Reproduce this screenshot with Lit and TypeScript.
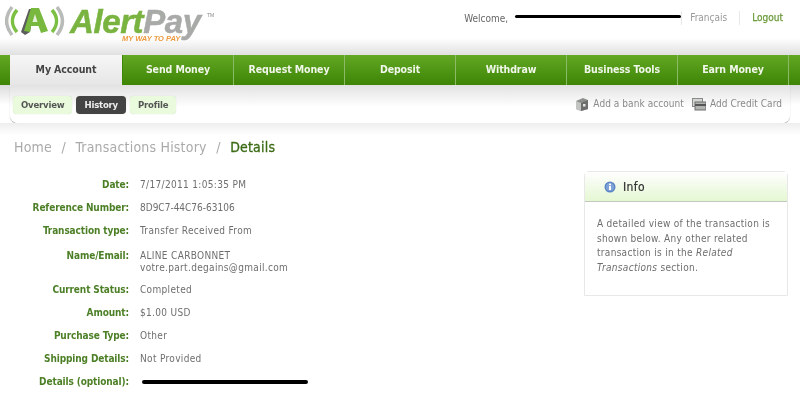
import { LitElement, html, css, svg } from "lit";
import { customElement } from "lit/decorators.js";

const logo = svg`<svg class="mark" width="64" height="34" viewBox="0 0 64 34">
  <path d="M7 2C0 11 0 21 7 30" fill="none" stroke="#b9bbb9" stroke-width="3.5"/>
  <path d="M12 5C6 12 6 20 12 27" fill="none" stroke="#7cc043" stroke-width="3.5"/>
  <path d="M47 5C53 12 53 20 47 27" fill="none" stroke="#7cc043" stroke-width="3.5"/>
  <path d="M52 2C59 11 59 21 52 30" fill="none" stroke="#b9bbb9" stroke-width="3.5"/>
  <path d="M16 27L24 4H29L25 27L20 30Z" fill="#5c5c5c"/>
  <path d="M19 26L26 3H34L43 26L36 28L33.5 21H26L25 27Z" fill="#78b83e"/>
  <path d="M27.5 17L30 9L32.5 17Z" fill="#e4f0d8"/>
</svg>`;

const bank = svg`<svg width="14" height="14" viewBox="0 0 14 14"><path d="M1 4L8 1L13 3V12L6 14L1 12Z" fill="#8d8f8d"/><path d="M1 4L6 6V14L1 12Z" fill="#c2c4c2"/><path d="M6 6L13 3V12L6 14Z" fill="#6c6e6c"/><rect x="8" y="7" width="2.5" height="2.5" fill="#e5e5e5"/></svg>`;
const card = svg`<svg width="14" height="13" viewBox="0 0 14 13"><rect x="0.5" y="0.5" width="10" height="8" fill="#d4d6d4" stroke="#8a8c8a"/><rect x="3" y="4" width="11" height="8" fill="#b2b4b2" stroke="#6c6e6c"/><rect x="3" y="6" width="11" height="2" fill="#555"/></svg>`;
const info = svg`<svg width="12" height="12" viewBox="0 0 12 12"><circle cx="6" cy="6" r="5.5" fill="#5b85c4"/><circle cx="6" cy="6" r="4" fill="#7fa3d8"/><rect x="5" y="5" width="2" height="4" fill="#fff"/><rect x="5" y="2.6" width="2" height="1.6" fill="#fff"/></svg>`;

const tabs = ["My Account", "Send Money", "Request Money", "Deposit", "Withdraw", "Business Tools", "Earn Money"];
const rows: [string, unknown, string][] = [
  ["Date:", "7/17/2011 1:05:35 PM", ""],
  ["Reference Number:", "8D9C7-44C76-63106", "tight"],
  ["Transaction type:", "Transfer Received From", ""],
  ["Name/Email:", html`ALINE CARBONNET<br />votre.part.degains@gmail.com`, "name"],
  ["Current Status:", "Completed", ""],
  ["Amount:", "$1.00 USD", ""],
  ["Purchase Type:", "Other", ""],
  ["Shipping Details:", "Not Provided", ""],
  ["Details (optional):", html`<div class="redact r2"></div>`, ""],
];

@customElement("app-root")
export class AppRoot extends LitElement {
  static styles = css`
    :host {
      display: block;
      width: 800px;
      height: 409px;
      overflow: hidden;
      background: #fff;
      font-family: "DejaVu Sans Condensed", "DejaVu Sans", sans-serif;
      font-stretch: condensed;
      font-size: 10px;
      color: #777;
    }
    .wrap { filter: blur(0.35px); height: 409px; }
    header {
      height: 55px;
      display: flex;
      justify-content: space-between;
      background: linear-gradient(#fff 0, #fff 38px, #e0e0e0 55px);
    }
    .brand { display: flex; align-items: flex-start; padding: 5px 0 0 5px; }
    .mark { flex: none; }
    .wordmark { position: relative; margin-left: 1px; height: 28px; font: italic bold 33px/34px "Liberation Sans", sans-serif; letter-spacing: -0.4px; -webkit-text-stroke: 0.5px; }
    .alert { color: #79b340; }
    .pay { color: #a8aaa8; }
    .tag { position: absolute; left: 52px; top: 29px; font: italic bold 7.5px/10px "Liberation Sans", sans-serif; letter-spacing: 0; -webkit-text-stroke: 0; color: #ee9a3e; }
    .tm { position: absolute; left: 137px; top: 7px; font: 5px/6px "Liberation Sans", sans-serif; letter-spacing: 0; -webkit-text-stroke: 0; color: #888; }
    .top { display: flex; align-items: center; height: 14px; margin: 11px 17px 0 0; }
    .welcome { color: #666; margin-right: 7px; width: 44px; }
    .redact { background: #000; border-radius: 2px; height: 3px; }
    .r1 { width: 166px; margin-top: -3px; }
    .r2 { width: 166px; height: 4px; margin: 5px 0 0 2px; }
    .lang { padding: 0 12px 0 8px; color: #999; border-left: 1px solid #e8e8e8; line-height: 14px; }
    .logout { padding-left: 12px; color: #6a9a3a; -webkit-text-stroke: 0.25px #6a9a3a; border-left: 1px solid #e8e8e8; line-height: 14px; }
    nav {
      height: 30px;
      padding-left: 10px;
      display: flex;
      background: linear-gradient(#62a824, #3f8506);
    }
    .tab {
      width: 110px;
      border-right: 1px solid #8cbb68;
      text-align: center;
      line-height: 29px;
      font-size: 10.5px;
      letter-spacing: -0.1px;
      font-weight: bold;
      color: #f1f7ea;
    }
    .tab.on { background: linear-gradient(#f6f6f6, #e6e6e6); color: #444; border-right: 1px solid #3f8506; width: 112px; }
    .band { background: linear-gradient(#dcdcdc, #fff 20px); height: 38px; }
    .sub {
      margin: 0 10px;
      height: 38px;
      box-sizing: border-box;
      padding: 11px 8px 0 3px;
      display: flex;
      justify-content: space-between;
      border-radius: 0 0 8px 8px;
      background: linear-gradient(#e2e2e2, #fff 22px);
      box-shadow: 0 1px 1px #aaa;
    }
    .pills { display: flex; gap: 4px; }
    .pill {
      height: 18px;
      padding: 0 8px;
      line-height: 17px;
      font-size: 9.5px;
      letter-spacing: -0.2px;
      font-weight: bold;
      border-radius: 4px;
      color: #555;
      background: #e9fbdc;
      box-shadow: 0 0 1px #b9cfa8;
    }
    .pill.on { background: #444; color: #eee; }
    .acts { display: flex; gap: 8px; line-height: 16px; letter-spacing: 0.06px; color: #8a8a8a; }
    .act { display: flex; align-items: center; gap: 4px; height: 16px; }
    .bg { background: linear-gradient(#eee, #fff 12px); padding: 14px 12px 0 14px; display: flex; justify-content: space-between; height: 272px; box-sizing: border-box; }
    .crumbs { font-size: 14px; line-height: 20px; letter-spacing: 0.2px; color: #aaa; margin-bottom: 21px; }
    .crumbs span { margin: 0 9.5px; }
    .crumbs b { font-weight: normal; color: #3a6b14; -webkit-text-stroke: 0.3px #3a6b14; }
    .rows { display: grid; grid-template-columns: 115px 1fr; column-gap: 11px; row-gap: 10px; line-height: 13px; }
    .k { text-align: right; font-weight: bold; letter-spacing: -0.12px; color: #4c7f26; }
    .v { color: #6e6e6e; letter-spacing: 0.33px; }
    .v.tight { letter-spacing: 0; }
    .k.name, .v.name { padding-top: 3px; line-height: 12px; margin-bottom: -1px; }
    .box { width: 204px; height: 125px; margin-top: 34px; box-sizing: border-box; border: 1px solid #e8e8e8; border-radius: 5px 5px 0 0; }
    .box h3 { margin: 0; height: 30px; box-sizing: border-box; padding-left: 19px; display: flex; align-items: center; gap: 7px; font-size: 12px; letter-spacing: 0.4px; font-weight: normal; color: #333; -webkit-text-stroke: 0.2px #333; border-bottom: 1px solid #c4c8c0; background: linear-gradient(#fff, #e4f7d2); }
    .box p { margin: 0; padding: 15px 12px; line-height: 14.7px; letter-spacing: 0.3px; color: #6e6e6e; }
  `;

  render() {
    return html`<div class="wrap">
      <header>
        <div class="brand">
          ${logo}
          <div class="wordmark"><span class="alert">Alert</span><span class="pay">Pay</span><span class="tag">MY WAY TO PAY</span><span class="tm">TM</span></div>
        </div>
        <div class="top">
          <span class="welcome">Welcome,</span><div class="redact r1"></div>
          <span class="lang">Français</span><span class="logout">Logout</span>
        </div>
      </header>
      <nav>${tabs.map((t, i) => html`<div class="tab ${i === 0 ? "on" : ""}">${t}</div>`)}</nav>
      <div class="band">
        <div class="sub">
          <div class="pills">
            <div class="pill">Overview</div><div class="pill on">History</div><div class="pill">Profile</div>
          </div>
          <div class="acts">
            <div class="act">${bank}Add a bank account</div>
            <div class="act">${card}Add Credit Card</div>
          </div>
        </div>
      </div>
      <div class="bg">
        <main>
          <div class="crumbs">Home<span>/</span>Transactions History<span>/</span><b>Details</b></div>
          <div class="rows">
            ${rows.map(([k, v, c]) => html`<div class="k ${c}">${k}</div><div class="v ${c}">${v}</div>`)}
          </div>
        </main>
        <aside class="box">
          <h3>${info}Info</h3>
          <p>A detailed view of the transaction is shown below. Any other related transaction is in the <i>Related Transactions</i> section.</p>
        </aside>
      </div>
    </div>`;
  }
}
